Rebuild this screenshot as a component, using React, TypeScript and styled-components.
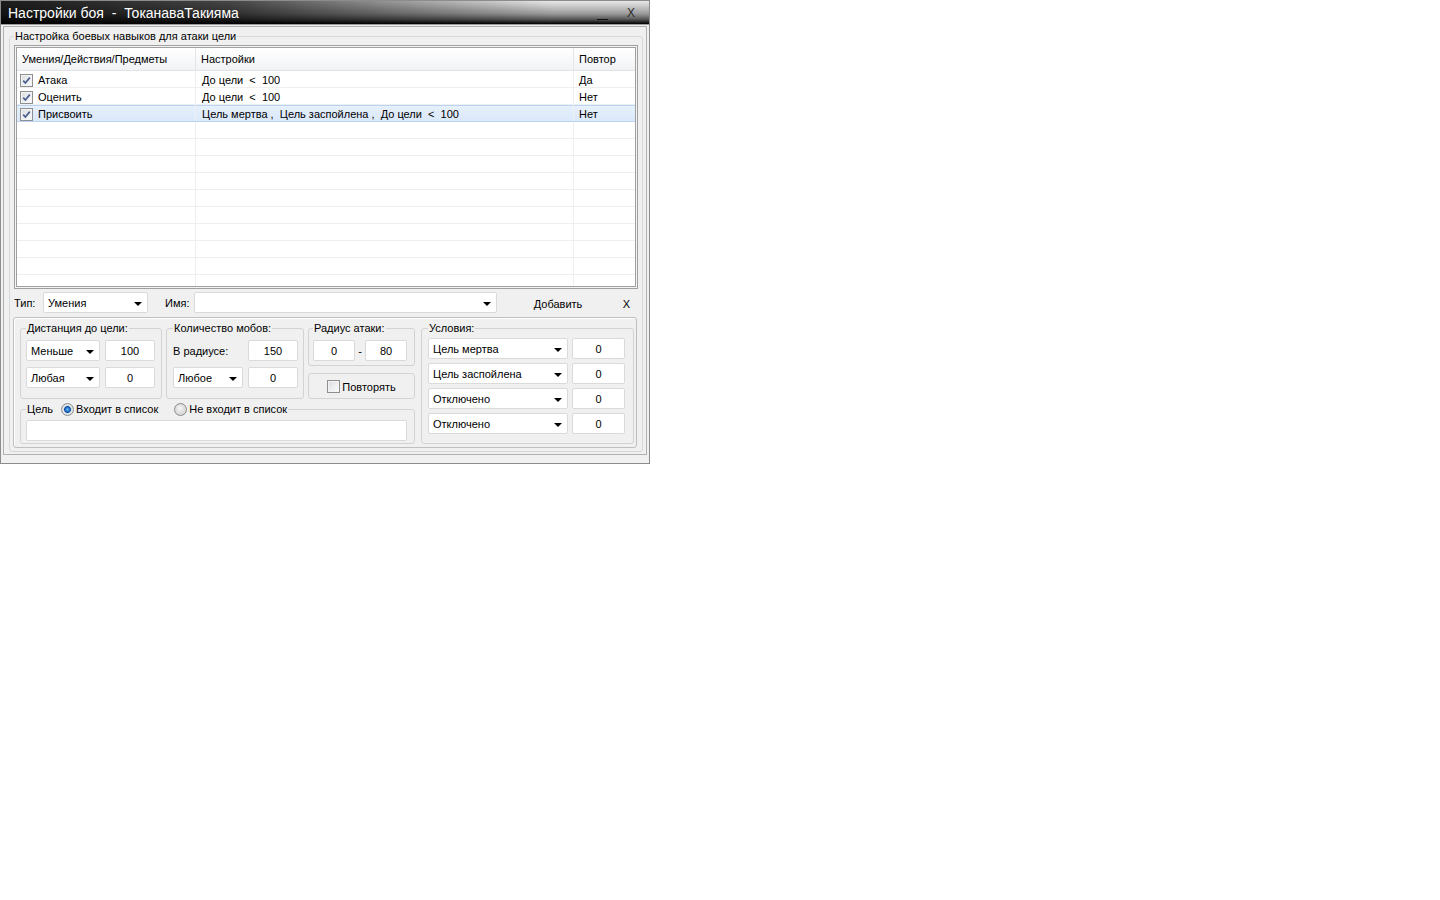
import React from 'react';
import styled, { createGlobalStyle } from 'styled-components';

const GlobalStyle = createGlobalStyle`
  html, body {
    margin: 0;
    padding: 0;
    background: #fff;
  }
  body {
    font-family: "Liberation Sans", Arial, sans-serif;
    font-size: 11px;
    color: #000;
  }
  * {
    box-sizing: border-box;
  }
`;

const Window = styled.div`
  width: 650px;
  border: 1px solid #8c8c8c;
  background: #f0f0f0;
`;

const TitleBar = styled.div`
  height: 24px;
  display: flex;
  align-items: center;
  padding-left: 7px;
  border-bottom: 1px solid #9a9a9a;
  background:
    linear-gradient(to right, rgba(0, 0, 0, 0.88) 0%, rgba(0, 0, 0, 0.7) 35%, rgba(0, 0, 0, 0) 85%),
    linear-gradient(to bottom, #e8e8e8 0%, #cacaca 22%, #9a9a9a 55%, #555 80%, #000 100%);
`;

const TitleText = styled.div`
  flex: 1;
  color: #fff;
  font-size: 14px;
  line-height: 16px;
  white-space: pre;
`;

const MinButton = styled.div`
  width: 24px;
  height: 22px;
  margin-right: 5px;
  display: flex;
  justify-content: center;
  align-items: flex-start;
`;

const MinBar = styled.span`
  display: block;
  width: 11px;
  height: 1px;
  margin-top: 17px;
  background: #111;
`;

const CloseButton = styled.div`
  width: 24px;
  height: 22px;
  margin-right: 6px;
  display: flex;
  justify-content: center;
  align-items: center;
  color: #2a2a2a;
  font-size: 12px;
  line-height: 14px;
`;

const Body = styled.div`
  padding: 1px 2px 8px 2px;
`;

const Frame = styled.div`
  border: 1px solid #b0b0b0;
  padding: 3px 3px 2px 5px;
`;

const MainGroup = styled.fieldset`
  margin: 0;
  min-width: 0;
  padding: 2px 4px 3px 4px;
  border: 1px solid #d5d9dd;
  border-radius: 3px;
`;

const Legend = styled.legend`
  padding: 0 1px;
  line-height: 13px;
  font-size: 11px;
  white-space: pre;
`;

const ListFrame = styled.div`
  height: 244px;
  border: 1px solid #a0a0a0;
  padding: 1px;
  background: #f4f4f4;
`;

const ListInner = styled.div`
  height: 100%;
  border: 1px solid #a0a0a0;
  background: #fff;
  overflow: hidden;
`;

const columns = '179px 378px 1fr';

const HeaderRow = styled.div`
  display: grid;
  grid-template-columns: ${columns};
  height: 23px;
  border-bottom: 1px solid #e3e3e3;
  background: linear-gradient(to bottom, #ffffff 0%, #f7f8f9 60%, #f1f2f4 100%);
`;

const HeaderCell = styled.div<{ $last?: boolean }>`
  display: flex;
  align-items: center;
  padding-left: 5px;
  border-right: ${(p) => (p.$last ? 'none' : '1px solid #e5e5e5')};
`;

const Row = styled.div<{ $selected?: boolean }>`
  display: grid;
  grid-template-columns: ${columns};
  height: 17px;
  border-bottom: 1px solid ${(p) => (p.$selected ? '#b8d4f4' : '#efefef')};
  background: ${(p) =>
    p.$selected ? 'linear-gradient(to bottom, #e8f1fc 0%, #dae8fa 100%)' : '#fff'};
  box-shadow: ${(p) => (p.$selected ? 'inset 0 1px 0 #b8d4f4' : 'none')};
`;

const Cell = styled.div<{ $pad: number; $last?: boolean }>`
  display: flex;
  align-items: center;
  gap: 5px;
  padding-top: 2px;
  padding-left: ${(p) => p.$pad}px;
  white-space: pre;
  overflow: hidden;
  border-right: ${(p) => (p.$last ? 'none' : '1px solid #efefef')};
`;

const CheckBox = styled.span`
  width: 13px;
  height: 13px;
  flex: none;
  display: inline-flex;
  align-items: center;
  justify-content: center;
  border: 1px solid #8e8f8f;
  background: linear-gradient(135deg, #d9dbdf 0%, #eef0f3 60%, #fbfbfb 100%);
  box-shadow: inset 0 0 0 1px #f4f4f4;
`;

const TypeRow = styled.div`
  display: flex;
  align-items: center;
  height: 21px;
  margin-top: 3px;
`;

const FieldLabel = styled.span<{ $gap?: number }>`
  width: 29px;
  margin-left: ${(p) => p.$gap ?? 0}px;
  flex: none;
`;

const Combo = styled.div<{ $w: number }>`
  width: ${(p) => p.$w}px;
  height: 21px;
  flex: none;
  display: flex;
  align-items: center;
  justify-content: space-between;
  padding: 0 5px 0 4px;
  background: #fff;
  border: 1px solid #dadada;
  border-radius: 2px;
  white-space: nowrap;
`;

const Arrow = styled.span`
  width: 0;
  height: 0;
  margin-top: 2px;
  border-left: 4px solid transparent;
  border-right: 4px solid transparent;
  border-top: 4px solid #000;
`;

const Field = styled.input<{ $w: number }>`
  width: ${(p) => p.$w}px;
  height: 21px;
  flex: none;
  padding: 0;
  margin: 0;
  font: inherit;
  color: #000;
  text-align: center;
  background: #fff;
  border: 1px solid #dadada;
  border-radius: 2px;
  outline: none;
`;

const FlatButton = styled.div<{ $w: number; $gap: number }>`
  width: ${(p) => p.$w}px;
  margin-left: ${(p) => p.$gap}px;
  height: 21px;
  flex: none;
  display: flex;
  align-items: center;
  justify-content: center;
  padding-top: 3px;
`;

const BottomPanel = styled.div`
  display: flex;
  gap: 6px;
  margin: 4px 1px 0 -1px;
  padding: 4px 3px 3px 6px;
  border: 1px solid #bfbfbf;
  border-radius: 3px;
  box-shadow: inset 1px 1px 0 #fff;
`;

const LeftColumn = styled.div`
  width: 395px;
  display: flex;
  flex-direction: column;
  gap: 4px;
`;

const GroupRow = styled.div`
  display: flex;
  gap: 4px;
`;

const Group = styled.fieldset<{ $w?: number; $pad: string; $gap?: number }>`
  margin: 0;
  min-width: 0;
  width: ${(p) => (p.$w ? `${p.$w}px` : 'auto')};
  flex: none;
  padding: ${(p) => p.$pad};
  border: 1px solid #d3d3d3;
  border-radius: 3px;
  display: flex;
  flex-direction: column;
  gap: ${(p) => p.$gap ?? 6}px;
`;

const Line = styled.div<{ $spread?: boolean; $gap?: number }>`
  display: flex;
  align-items: center;
  justify-content: ${(p) => (p.$spread ? 'space-between' : 'flex-start')};
  gap: ${(p) => p.$gap ?? 5}px;
`;

const Stack = styled.div`
  width: 107px;
  display: flex;
  flex-direction: column;
  gap: 7px;
`;

const Dash = styled.span`
  width: 10px;
  text-align: center;
`;

const RepeatBox = styled.div`
  height: 26px;
  display: flex;
  align-items: center;
  justify-content: center;
  gap: 2px;
  padding-top: 1px;
  border: 1px solid #d3d3d3;
  border-radius: 3px;
`;

const LegendLine = styled.span`
  display: flex;
  align-items: center;
  height: 13px;
`;

const Radio = styled.span<{ $checked?: boolean; $gap: number }>`
  width: 13px;
  height: 13px;
  flex: none;
  margin-left: ${(p) => p.$gap}px;
  margin-right: 2px;
  border-radius: 50%;
  border: 1px solid #8a8c8e;
  background: ${(p) =>
    p.$checked
      ? 'radial-gradient(circle at 50% 50%, #7fc0f4 0, #2a7fd4 1.6px, #0f4f9e 3px, #c8d6e6 3.8px, #e8e8e8 4.6px, #cfcfcf 100%)'
      : 'radial-gradient(circle at 45% 40%, #fafafa 0, #e4e4e4 3px, #cdcdcd 100%)'};
`;

const settingsRows = [
  { name: 'Атака', settings: 'До цели  <  100', repeat: 'Да' },
  { name: 'Оценить', settings: 'До цели  <  100', repeat: 'Нет' },
  {
    name: 'Присвоить',
    settings: 'Цель мертва ,  Цель заспойлена ,  До цели  <  100',
    repeat: 'Нет',
    selected: true,
  },
];

const conditions = ['Цель мертва', 'Цель заспойлена', 'Отключено', 'Отключено'];

function Check() {
  return (
    <CheckBox>
      <svg width="9" height="9" viewBox="0 0 9 9">
        <path d="M1.2 4.6 L3.4 7 L7.8 1.6" fill="none" stroke="#4a5f8c" strokeWidth="1.7" />
      </svg>
    </CheckBox>
  );
}

export default function App() {
  const empty = Array.from({ length: 10 });

  return (
    <>
      <GlobalStyle />
      <Window>
        <TitleBar>
          <TitleText>Настройки боя  -  ТоканаваТакияма</TitleText>
          <MinButton>
            <MinBar />
          </MinButton>
          <CloseButton>X</CloseButton>
        </TitleBar>
        <Body>
          <Frame>
            <MainGroup>
              <Legend>Настройка боевых навыков для атаки цели</Legend>
              <ListFrame>
                <ListInner>
                  <HeaderRow>
                    <HeaderCell>Умения/Действия/Предметы</HeaderCell>
                    <HeaderCell>Настройки</HeaderCell>
                    <HeaderCell $last>Повтор</HeaderCell>
                  </HeaderRow>
                  {settingsRows.map((r) => (
                    <Row key={r.name} $selected={r.selected}>
                      <Cell $pad={3}>
                        <Check />
                        {r.name}
                      </Cell>
                      <Cell $pad={6}>{r.settings}</Cell>
                      <Cell $pad={5} $last>
                        {r.repeat}
                      </Cell>
                    </Row>
                  ))}
                  {empty.map((_, i) => (
                    <Row key={i}>
                      <Cell $pad={3} />
                      <Cell $pad={6} />
                      <Cell $pad={5} $last />
                    </Row>
                  ))}
                </ListInner>
              </ListFrame>

              <TypeRow>
                <FieldLabel>Тип:</FieldLabel>
                <Combo $w={105}>
                  Умения
                  <Arrow />
                </Combo>
                <FieldLabel $gap={17}>Имя:</FieldLabel>
                <Combo $w={303}>
                  <span />
                  <Arrow />
                </Combo>
                <FlatButton $w={96} $gap={13}>Добавить</FlatButton>
                <FlatButton $w={21} $gap={10}>X</FlatButton>
              </TypeRow>

              <BottomPanel>
                <LeftColumn>
                  <GroupRow>
                    <Group $w={142} $pad="5px 5px 10px 5px">
                      <Legend>Дистанция до цели:</Legend>
                      <Line>
                        <Combo $w={74}>
                          Меньше
                          <Arrow />
                        </Combo>
                        <Field $w={50} value="100" readOnly />
                      </Line>
                      <Line>
                        <Combo $w={74}>
                          Любая
                          <Arrow />
                        </Combo>
                        <Field $w={50} value="0" readOnly />
                      </Line>
                    </Group>
                    <Group $w={138} $pad="5px 5px 10px 6px">
                      <Legend>Количество мобов:</Legend>
                      <Line $spread>
                        В радиусе:
                        <Field $w={50} value="150" readOnly />
                      </Line>
                      <Line>
                        <Combo $w={70}>
                          Любое
                          <Arrow />
                        </Combo>
                        <Field $w={50} value="0" readOnly />
                      </Line>
                    </Group>
                    <Stack>
                      <Group $pad="5px 7px 4px 4px">
                        <Legend>Радиус атаки:</Legend>
                        <Line $gap={0}>
                          <Field $w={42} value="0" readOnly />
                          <Dash>-</Dash>
                          <Field $w={42} value="80" readOnly />
                        </Line>
                      </Group>
                      <RepeatBox>
                        <CheckBox />
                        Повторять
                      </RepeatBox>
                    </Stack>
                  </GroupRow>
                  <Group $pad="4px 7px 2px 5px">
                    <Legend>
                      <LegendLine>
                        Цель
                        <Radio $checked $gap={8} />
                        Входит в список
                        <Radio $gap={16} />
                        Не входит в список
                      </LegendLine>
                    </Legend>
                    <Field $w={381} value="" readOnly />
                  </Group>
                </LeftColumn>
                <Group $w={213} $pad="3px 8px 9px 6px" $gap={4}>
                  <Legend>Условия:</Legend>
                  {conditions.map((c, i) => (
                    <Line key={i} $gap={4}>
                      <Combo $w={140}>
                        {c}
                        <Arrow />
                      </Combo>
                      <Field $w={53} value="0" readOnly />
                    </Line>
                  ))}
                </Group>
              </BottomPanel>
            </MainGroup>
          </Frame>
        </Body>
      </Window>
    </>
  );
}
